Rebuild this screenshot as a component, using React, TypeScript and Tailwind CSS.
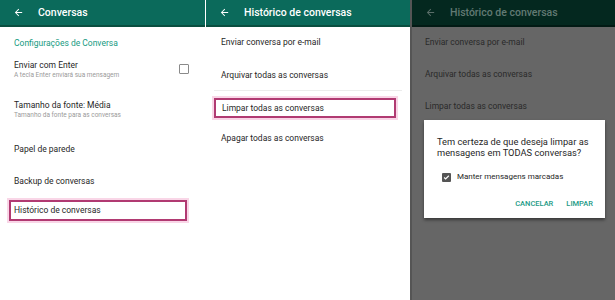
import React from "react";

const font = { fontFamily: "Roboto, 'Noto Sans', sans-serif" };

function Arrow({ color = "#ffffff" }: { color?: string }) {
  return (
    <svg width="11" height="11" viewBox="0 0 24 24" fill={color}>
      <path d="M20 11H7.83l5.59-5.59L12 4l-8 8 8 8 1.41-1.41L7.83 13H20v-2z" />
    </svg>
  );
}

function Header({ title, dim = false }: { title: string; dim?: boolean }) {
  return (
    <div
      className={`h-[27px] flex items-center pl-[13px] gap-[11px] border-b-2 ${
        dim ? "bg-[#04281f] border-[#021a14]" : "bg-[#0b6a5b] border-[#0a4f40]"
      }`}
    >
      <Arrow color={dim ? "#5b6e69" : "#ffffff"} />
      <span
        className={`text-[10.5px] font-medium ml-[3px] ${dim ? "text-[#627a73]" : "text-white"}`}
      >
        {title}
      </span>
    </div>
  );
}

function Highlight({ children, className = "" }: { children: React.ReactNode; className?: string }) {
  return (
    <div
      className={`border-2 border-[#b13a72] shadow-[0_0_0_2px_#f9d6e7] flex items-center ${className}`}
    >
      {children}
    </div>
  );
}

function Panel1() {
  return (
    <div className="w-[205px] bg-white h-full flex flex-col">
      <Header title="Conversas" />
      <div className="pl-[14px] pt-[11px] text-[8.5px] text-[#1f1f1f]">
        <div className="text-[#169a7f] h-[10px] leading-[10px]">Configurações de Conversa</div>
        <div className="mt-[12px] flex items-start pr-[16px]">
          <div className="flex-1">
            <div className="leading-[11px]">Enviar com Enter</div>
            <div className="text-[6.5px] text-[#9a9a9a] leading-[9px]">A tecla Enter enviará sua mensagem</div>
          </div>
          <div className="w-[10px] h-[10px] border-[1.5px] border-[#8a8a8a] rounded-[1px] mt-[4px]" />
        </div>
        <div className="mt-[20px] leading-[11px]">Tamanho da fonte: Média</div>
        <div className="text-[6.5px] text-[#9a9a9a] leading-[9px]">Tamanho da fonte para as conversas</div>
        <div className="mt-[24px] leading-[11px]">Papel de parede</div>
        <div className="mt-[21px] leading-[11px]">Backup de conversas</div>
      </div>
      <div className="pl-[9px] pr-[18px] mt-[13px]">
        <Highlight className="h-[21px] pl-[3px] text-[8.5px] text-[#1f1f1f]">Histórico de conversas</Highlight>
      </div>
    </div>
  );
}

const items = [
  "Enviar conversa por e-mail",
  "Arquivar todas as conversas",
  "Limpar todas as conversas",
  "Apagar todas as conversas",
];

function Panel2() {
  return (
    <div className="w-[204px] bg-white h-full flex flex-col">
      <Header title="Histórico de conversas" />
      <div className="text-[8.5px] text-[#1f1f1f] pt-[10px]">
        <div className="pl-[15px] h-[11px] leading-[11px]">{items[0]}</div>
        <div className="pl-[15px] h-[11px] leading-[11px] mt-[22px]">{items[1]}</div>
        <div className="mx-[8px] mt-[9px] h-px bg-[#ececec]" />
        <div className="pl-[8px] pr-[14px] mt-[7px]">
          <Highlight className="h-[20px] pl-[6px]">{items[2]}</Highlight>
        </div>
        <div className="pl-[15px] h-[11px] leading-[11px] mt-[15px]">{items[3]}</div>
      </div>
    </div>
  );
}

function Panel3() {
  return (
    <div className="w-[205px] h-full flex flex-col bg-[#666666] border-l-2 border-[#555555]">
      <Header title="Histórico de conversas" dim />
      <div className="text-[8.5px] text-[#2a2a2a] pt-[10px] pl-[13px]">
        <div className="h-[11px] leading-[11px]">{items[0]}</div>
        <div className="h-[11px] leading-[11px] mt-[21px]">{items[1]}</div>
        <div className="h-[11px] leading-[11px] mt-[21px]">{items[2]}</div>
      </div>
      <div className="ml-[12px] mr-[10px] mt-[8px] bg-white shadow-[0_2px_3px_rgba(0,0,0,0.45)] h-[98px] pl-[13px] pr-[10px] pt-[16px]">
        <div className="text-[9.3px] text-[#1f1f1f] leading-[11px]">
          Tem certeza de que deseja limpar as mensagens em TODAS conversas?
        </div>
        <div className="flex items-center mt-[13px] ml-[5px] gap-[6px]">
          <div className="w-[9px] h-[9px] bg-[#555555] rounded-[1px] flex items-center justify-center">
            <svg width="7" height="7" viewBox="0 0 24 24" fill="none" stroke="white" strokeWidth="4">
              <path d="M4 12l5 5L20 6" />
            </svg>
          </div>
          <span className="text-[8px] text-[#1f1f1f]">Manter mensagens marcadas</span>
        </div>
        <div className="flex justify-end gap-[13px] mt-[15px] pr-[2px] text-[7.5px] font-medium text-[#1d9a86]">
          <span>CANCELAR</span>
          <span>LIMPAR</span>
        </div>
      </div>
    </div>
  );
}

export default function App() {
  return (
    <div className="w-[615px] h-[300px] flex overflow-hidden bg-white" style={font}>
      <Panel1 />
      <div className="w-px bg-white" />
      <Panel2 />
      <Panel3 />
    </div>
  );
}
